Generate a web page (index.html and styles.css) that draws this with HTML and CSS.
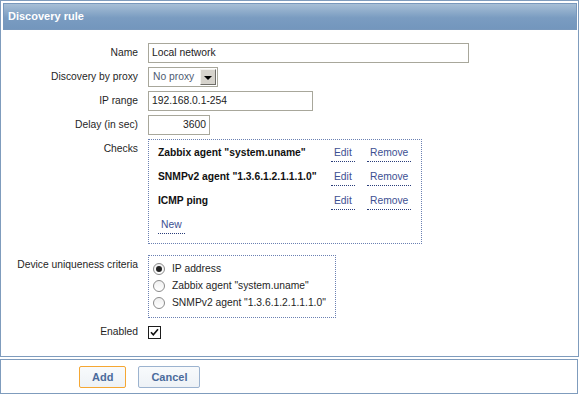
FILE: index.html
```html
<!doctype html>
<html lang="en">
<head>
  <meta charset="utf-8" />
  <title>Discovery rule</title>
  <link rel="stylesheet" href="styles.css">
</head>
<body>
  <div class="formbox">
    <div class="form-head">Discovery rule</div>
    <div class="form-body">
      <label class="lbl">Name</label>
      <div class="fld"><span class="input w-name">Local network</span></div>

      <label class="lbl">Discovery by proxy</label>
      <div class="fld">
        <span class="select"><span class="select-val">No proxy</span><span class="select-btn"></span></span>
      </div>

      <label class="lbl">IP range</label>
      <div class="fld"><span class="input w-ip">192.168.0.1-254</span></div>

      <label class="lbl">Delay (in sec)</label>
      <div class="fld"><span class="input w-delay num">3600</span></div>

      <label class="lbl lbl-top">Checks</label>
      <div class="fld fld-checks">
        <div class="checks">
          <div class="chk-name">Zabbix agent "system.uname"</div>
          <div><a class="link">Edit</a></div>
          <div><a class="link">Remove</a></div>

          <div class="chk-name">SNMPv2 agent "1.3.6.1.2.1.1.1.0"</div>
          <div><a class="link">Edit</a></div>
          <div><a class="link">Remove</a></div>

          <div class="chk-name">ICMP ping</div>
          <div><a class="link">Edit</a></div>
          <div><a class="link">Remove</a></div>

          <div><a class="link">New</a></div>
        </div>
      </div>

      <label class="lbl lbl-top">Device uniqueness criteria</label>
      <div class="fld">
        <div class="uniq">
          <div class="radio-row"><span class="radio on"></span>IP address</div>
          <div class="radio-row"><span class="radio"></span>Zabbix agent "system.uname"</div>
          <div class="radio-row"><span class="radio"></span>SNMPv2 agent "1.3.6.1.2.1.1.1.0"</div>
        </div>
      </div>

      <label class="lbl">Enabled</label>
      <div class="fld fld-mid">
        <span class="checkbox">
          <svg width="11" height="11" viewBox="0 0 11 11"><path d="M2 5.2 L4.3 7.8 L9 2.2" fill="none" stroke="#111" stroke-width="1.6"/></svg>
        </span>
      </div>
    </div>
  </div>

  <div class="form-foot">
    <button class="btn btn-main">Add</button>
    <button class="btn">Cancel</button>
  </div>
</body>
</html>
```

FILE: styles.css
```css
body { margin:0; background:#fff; font-family:"Liberation Sans", Arial, sans-serif; font-size:10.3px; color:#1f1f1f; }
.formbox { width:574px; border:1px solid #7f9cbd; padding:2px 1px 0 2px; }
.form-head { height:25px; line-height:25px; padding-left:4px; border:1px solid #7898bc; background:linear-gradient(#a7bfd6, #7a9cc1 55%, #7396bd); color:#fff; font-weight:bold; font-size:11px; }
.form-body { display:grid; grid-template-columns:135px auto; column-gap:10px; row-gap:4px; padding:13px 0 14px; }
.lbl { text-align:right; line-height:20px; }
.fld { display:flex; align-items:center; }
.fld-mid { height:20px; }
.fld-checks { margin-bottom:7px; }

.input { box-sizing:border-box; height:20px; line-height:18px; border:1px solid #a8a79b; padding:0 3px; color:#222; background:#fff; }
.w-name { width:321px; }
.w-ip { width:165px; }
.w-delay { width:62px; }
.num { text-align:right; }

.select { box-sizing:border-box; height:20px; width:70px; display:flex; border:1px solid #a8a79b; background:#fff; padding:1px; }
.select-val { flex:1; line-height:16px; padding-left:3px; color:#4e5b72; }
.select-btn { width:14px; background:#d6d3cc; border:1px solid; border-color:#f4f3ef #6e6d68 #6e6d68 #f4f3ef; position:relative; }
.select-btn::after { content:""; position:absolute; left:3px; top:6px; border:4px solid transparent; border-top:4px solid #000; border-bottom:0; }

.checks { box-sizing:border-box; width:274px; border:1px dotted #6a80b2; padding:0 0 7px 9px; display:grid; grid-template-columns:173px 36px auto; grid-auto-rows:24px; align-items:center; }
.chk-name { font-weight:bold; color:#111; }
.link { display:inline-block; line-height:13px; padding:3px 3px 2px; border-bottom:1px dotted #2a3d7a; color:#3d4f92; cursor:pointer; }

.uniq { box-sizing:border-box; width:188px; border:1px dotted #6a80b2; padding:4px 4px 6px; }
.radio-row { height:17px; display:flex; align-items:center; }
.radio { box-sizing:border-box; width:12px; height:12px; border-radius:50%; border:1px solid #8a8a8a; background:linear-gradient(#f0f0f0, #fff); margin-right:7px; position:relative; }
.radio.on::after { content:""; position:absolute; left:2px; top:2px; width:6px; height:6px; border-radius:50%; background:#222; }

.checkbox { box-sizing:border-box; width:13px; height:13px; border:1px solid #1c1c1c; background:#fff; display:flex; align-items:center; justify-content:center; }

.form-foot { width:576px; height:33px; margin-top:2px; border:1px solid #7f9cbd; display:flex; align-items:center; gap:12px; }
.btn { box-sizing:border-box; height:22px; padding:0 12px; background:linear-gradient(#f8fafc, #eef2f6); border:1px solid #9cb3cf; border-radius:2px; color:#4b6b9c; font-family:"Liberation Sans", Arial, sans-serif; font-weight:bold; font-size:11px; }
.btn-main { margin-left:78px; min-width:46px; border-color:#f5a733; }
```
